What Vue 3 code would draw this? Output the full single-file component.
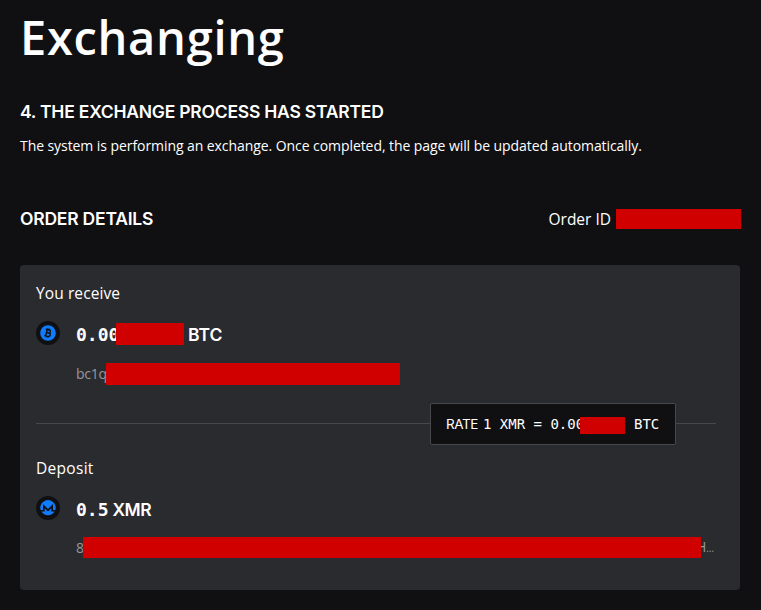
<template>
  <main class="exchange">
    <h1>Exchanging</h1>

    <section class="status">
      <h2 class="status-title">4. THE EXCHANGE PROCESS HAS STARTED</h2>
      <p>The system is performing an exchange. Once completed, the page will be updated automatically.</p>
    </section>

    <div class="order-head">
      <h2 class="order-title">ORDER DETAILS</h2>
      <div class="order-id">
        <span>Order ID</span>
        <i class="redacted order-mask"></i>
      </div>
    </div>

    <section class="card">
      <div class="label receive-label">You receive</div>
      <div class="row">
        <svg class="coin" viewBox="0 0 24 24">
          <circle cx="12" cy="12" r="12" fill="#101012" />
          <circle cx="12" cy="12" r="7.8" fill="#0f7cff" />
          <g transform="rotate(12 12 12)" fill="none" stroke="#101012">
            <path d="M9 8.8h3.6a1.5 1.5 0 0 1 0 3h-2M9 15.2h3.9a1.7 1.7 0 0 0 0-3.4h-2.3M10.4 8.8v6.4" stroke-width="1.4" />
            <path d="M11 7.2v1.7M12.9 7.2v1.7M11 15v1.8M12.9 15v1.8" stroke-width="1" />
          </g>
        </svg>
        <div class="amount">
          <span class="mono btc-value">0.00</span>
          <i class="redacted amount-mask"></i>
          <span class="unit btc">BTC</span>
        </div>
      </div>
      <div class="address receive-address">
        <span class="addr-start">bc1q</span>
        <i class="redacted receive-mask"></i>
      </div>

      <div class="divider">
        <div class="rate">
          <span class="rate-label">RATE</span>
          <span class="rate-value">1 XMR = 0.00</span>
          <i class="redacted rate-mask"></i>
          <span class="rate-unit">BTC</span>
        </div>
      </div>

      <div class="label deposit-label">Deposit</div>
      <div class="row">
        <svg class="coin" viewBox="0 0 24 24">
          <circle cx="12" cy="12" r="12" fill="#101012" />
          <path
            d="M4.6 13.9A7.7 7.7 0 1 1 19.4 13.9H17V8.1L12 13.1 7 8.1v5.8zM5.4 15.6h3.3v-3.4l3.3 3.3 3.3-3.3v3.4h3.3a7.7 7.7 0 0 1-13.2 0z"
            fill="#0f7cff"
          />
        </svg>
        <div class="amount">
          <span class="mono">0.5</span>
          <span class="unit xmr">XMR</span>
        </div>
      </div>
      <div class="address deposit-address">
        <span class="addr-eight">8</span>
        <i class="redacted deposit-mask"></i>
        <span class="addr-end">H<span class="dots">…</span></span>
      </div>
    </section>
  </main>
</template>

<script setup>
</script>

<style>
body {
  background: #101012;
}
</style>

<style scoped>
.exchange {
  box-sizing: border-box;
  width: 761px;
  height: 610px;
  padding: 6px 21px 0 20px;
  overflow: hidden;
  background: #101012;
  color: #fff;
  font-family: "Open Sans", sans-serif;
  white-space: nowrap;
}

h1,
h2,
p {
  margin: 0;
}

h1 {
  height: 62px;
  font-size: 47px;
  line-height: 62px;
  font-weight: 600;
  letter-spacing: 0.7px;
}

.status {
  padding-top: 32px;
}

h2 {
  height: 24px;
  font-family: Inter, sans-serif;
  font-size: 17.5px;
  line-height: 24px;
  font-weight: 600;
  letter-spacing: -0.22px;
}

.status p {
  height: 20px;
  margin-top: 12px;
  font-size: 14px;
  line-height: 20px;
  letter-spacing: -0.07px;
}

.order-head {
  display: flex;
  justify-content: space-between;
  height: 24px;
  margin-top: 51px;
}

.order-id {
  display: flex;
  align-items: center;
  margin-right: -1px;
  font-size: 15.5px;
  line-height: 24px;
}

.redacted {
  position: relative;
  display: block;
  flex: none;
  background: #d00000;
}

.order-mask {
  width: 125px;
  height: 20px;
  margin-left: 5px;
}

.card {
  box-sizing: border-box;
  width: 720px;
  height: 325px;
  margin-top: 34px;
  padding: 16px 24px 0 16px;
  background: #2a2b2f;
  border-radius: 4px;
}

.label {
  height: 24px;
  font-size: 15.5px;
  line-height: 24px;
}

.receive-label {
  letter-spacing: 0.1px;
}

.deposit-label {
  margin-top: 11px;
  letter-spacing: 0.3px;
}

.row {
  display: flex;
  align-items: center;
  height: 24px;
  margin-top: 16px;
}

.coin {
  flex: none;
  width: 24px;
  height: 24px;
}

.amount {
  display: flex;
  align-items: center;
  height: 24px;
  margin-left: 16px;
  padding-top: 4px;
  line-height: 24px;
}

.mono {
  font-family: "DejaVu Sans Mono", monospace;
  font-size: 18px;
  font-weight: 700;
}

.btc-value {
  width: 40px;
}

.amount-mask {
  width: 68px;
  height: 22px;
  margin-bottom: 2px;
}

.unit {
  margin-left: 4px;
  font-family: Inter, sans-serif;
  font-size: 17.5px;
  font-weight: 600;
}

.btc {
  letter-spacing: 0;
}

.xmr {
  letter-spacing: -0.5px;
}

.address {
  display: flex;
  align-items: center;
  color: #97989b;
  font-size: 14px;
  line-height: 22px;
}

.receive-address {
  height: 22px;
  margin: 18px 0 0 40px;
}

.addr-start {
  width: 30px;
  letter-spacing: -0.3px;
}

.receive-mask {
  width: 294px;
  height: 22px;
}

.divider {
  display: flex;
  justify-content: flex-end;
  align-items: center;
  height: 42px;
  margin-top: 18px;
  padding-right: 40px;
  background: linear-gradient(#47484c, #47484c) 0 20px / 100% 1px no-repeat;
}

.rate {
  box-sizing: border-box;
  display: flex;
  align-items: center;
  width: 246px;
  height: 42px;
  padding-left: 15px;
  background: #101012;
  border: 1px solid #47484c;
  border-radius: 2px;
  font-family: "DejaVu Sans Mono", monospace;
  font-size: 14px;
}

.rate-label {
  width: 37px;
  font-family: Inter, sans-serif;
  font-size: 13.5px;
  letter-spacing: -0.4px;
}

.rate-value {
  width: 97px;
}

.rate-mask {
  width: 45px;
  height: 17px;
  margin-top: 2px;
}

.rate-unit {
  margin-left: 9px;
}

.deposit-address {
  height: 21px;
  margin: 17px 0 0 40px;
}

.addr-eight {
  width: 7px;
}

.deposit-mask {
  width: 618px;
  height: 21px;
}

/* The truncated address runs out from under the mask */
.addr-end {
  margin-left: -5px;
}

.dots {
  font-size: 10px;
}
</style>
